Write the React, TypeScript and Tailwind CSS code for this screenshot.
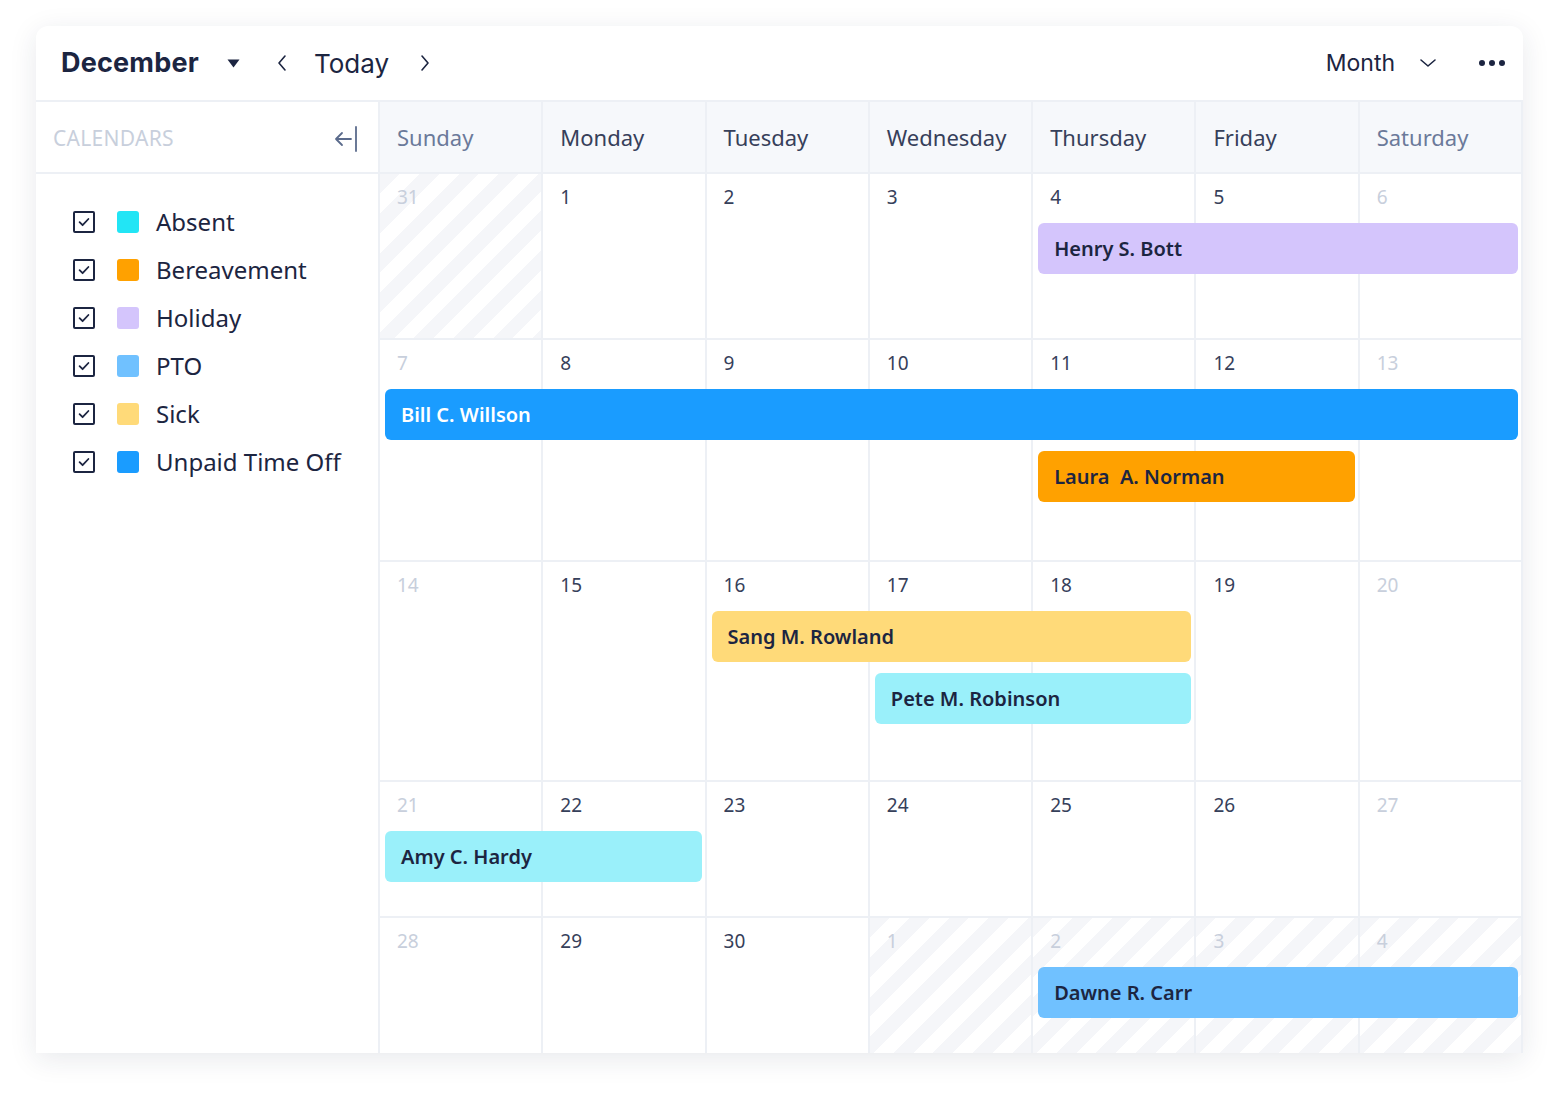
import React from 'react';

type Ev = { name: string; col: number; span: number; row: number; color: string; light?: boolean };
type Day = { n: number; muted?: boolean; striped?: boolean };
type Week = { h: string; days: Day[]; events: Ev[] };

const legend = [
    { label: 'Absent', color: 'bg-[#22e5f5]' },
    { label: 'Bereavement', color: 'bg-[#ffa100]' },
    { label: 'Holiday', color: 'bg-[#d4c5fc]' },
    { label: 'PTO', color: 'bg-[#70c1ff]' },
    { label: 'Sick', color: 'bg-[#ffda79]' },
    { label: 'Unpaid Time Off', color: 'bg-[#1a9cff]' },
];

const dayNames = ['Sunday', 'Monday', 'Tuesday', 'Wednesday', 'Thursday', 'Friday', 'Saturday'];

const colStart = ['', 'col-start-1', 'col-start-2', 'col-start-3', 'col-start-4', 'col-start-5', 'col-start-6', 'col-start-7'];
const colSpan = ['', 'col-span-1', 'col-span-2', 'col-span-3', 'col-span-4', 'col-span-5', 'col-span-6', 'col-span-7'];

const mk = (start: number, mutedIdx: number[], striped: number[] = [], wrapAt = 0): Day[] =>
    Array.from({ length: 7 }, (_, i) => {
        let n = start + i;
        if (wrapAt && n > wrapAt) n -= wrapAt;
        return { n, muted: mutedIdx.includes(i), striped: striped.includes(i) };
    });

const weeks: Week[] = [
    {
        h: 'h-[166px]',
        days: [{ n: 31, muted: true, striped: true }, ...mk(1, [5]).slice(0, 6)],
        events: [{ name: 'Henry S. Bott', col: 5, span: 3, row: 2, color: 'bg-[#d4c5fc]' }],
    },
    {
        h: 'h-[222px]',
        days: mk(7, [0, 6]),
        events: [
            { name: 'Bill C. Willson', col: 1, span: 7, row: 2, color: 'bg-[#1a9cff]', light: true },
            { name: 'Laura  A. Norman', col: 5, span: 2, row: 4, color: 'bg-[#ffa100]' },
        ],
    },
    {
        h: 'h-[220px]',
        days: mk(14, [0, 6]),
        events: [
            { name: 'Sang M. Rowland', col: 3, span: 3, row: 2, color: 'bg-[#ffda79]' },
            { name: 'Pete M. Robinson', col: 4, span: 2, row: 4, color: 'bg-[#9af0fa]' },
        ],
    },
    {
        h: 'h-[136px]',
        days: mk(21, [0, 6]),
        events: [{ name: 'Amy C. Hardy', col: 1, span: 2, row: 2, color: 'bg-[#9af0fa]' }],
    },
    {
        h: 'h-[135px]',
        days: mk(28, [0, 3, 4, 5, 6], [3, 4, 5, 6], 30),
        events: [{ name: 'Dawne R. Carr', col: 5, span: 3, row: 2, color: 'bg-[#70c1ff]' }],
    },
];

const stripes = 'bg-[repeating-linear-gradient(135deg,#f5f6f9_0px,#f5f6f9_14px,#ffffff_14px,#ffffff_28px)]';

function Check() {
    return (
        <div className="w-[22px] h-[22px] border-2 border-[#1c2541] rounded-[2px] flex items-center justify-center">
            <svg width="14" height="14" viewBox="0 0 14 14" fill="none">
                <path d="M2.6 7.2l3 3L11.4 4" stroke="#1c2541" strokeWidth="1.8" strokeLinecap="round" strokeLinejoin="round" />
            </svg>
        </div>
    );
}

export default function App() {
    return (
        <div className="min-h-screen bg-white pt-[26px] pl-[36px] pb-12 font-['Noto_Sans',sans-serif] text-[#1c2541]">
            <div className="w-[1487px] bg-white rounded-tl-[12px] rounded-tr-[12px] shadow-[0_6px_28px_rgba(30,40,70,0.10)] overflow-hidden">
                {/* Top bar */}
                <div className="h-[76px] border-b-2 border-[#edf0f5] flex items-center pl-[25px] pr-[18px] font-['Inter',sans-serif]">
                    <span className="text-[27px] font-bold tracking-[0.2px] text-[#1c2541]">December</span>
                    <svg className="ml-[28px]" width="13" height="9" viewBox="0 0 13 9">
                        <path d="M0.5 0.5h12L6.5 8.5z" fill="#1c2541" />
                    </svg>
                    <svg className="ml-[36px]" width="12" height="18" viewBox="0 0 12 18" fill="none">
                        <path d="M9 2L3 9l6 7" stroke="#1c2541" strokeWidth="1.6" strokeLinecap="round" strokeLinejoin="round" />
                    </svg>
                    <span className="ml-[26px] text-[26px] text-[#1c2541]">Today</span>
                    <svg className="ml-[30px]" width="12" height="18" viewBox="0 0 12 18" fill="none">
                        <path d="M3 2l6 7-6 7" stroke="#1c2541" strokeWidth="1.6" strokeLinecap="round" strokeLinejoin="round" />
                    </svg>
                    <div className="ml-auto flex items-center">
                        <span className="text-[23px] text-[#1c2541]">Month</span>
                        <svg className="ml-[24px]" width="18" height="10" viewBox="0 0 18 10" fill="none">
                            <path d="M2 2l7 6 7-6" stroke="#1c2541" strokeWidth="1.6" strokeLinecap="round" strokeLinejoin="round" />
                        </svg>
                        <div className="ml-[42px] flex gap-[4px]">
                            <span className="w-[6px] h-[6px] rounded-full bg-[#1c2541]" />
                            <span className="w-[6px] h-[6px] rounded-full bg-[#1c2541]" />
                            <span className="w-[6px] h-[6px] rounded-full bg-[#1c2541]" />
                        </div>
                    </div>
                </div>

                <div className="flex">
                    {/* Sidebar */}
                    <div className="w-[344px] shrink-0 border-r-2 border-[#edf0f5]">
                        <div className="h-[72px] border-b-2 border-[#edf0f5] flex items-center pl-[17px] pr-[20px] pt-[3px]">
                            <span className="text-[21px] text-[#c8cfdc] tracking-[0.3px]">CALENDARS</span>
                            <svg className="ml-auto" width="24" height="26" viewBox="0 0 24 26" fill="none">
                                <path d="M17 13H2M8 7l-6 6 6 6" stroke="#5b6b8c" strokeWidth="1.8" strokeLinecap="round" strokeLinejoin="round" />
                                <path d="M22 1v24" stroke="#5b6b8c" strokeWidth="1.8" strokeLinecap="round" />
                            </svg>
                        </div>
                        <div className="pt-[32px] pl-[37px] flex flex-col gap-[16px]">
                            {legend.map((l) => (
                                <div key={l.label} className="flex items-center h-[32px]">
                                    <Check />
                                    <span className={`ml-[22px] w-[22px] h-[22px] rounded-[3px] ${l.color}`} />
                                    <span className="ml-[17px] text-[24px] text-[#1c2541] leading-none">{l.label}</span>
                                </div>
                            ))}
                        </div>
                    </div>

                    {/* Month grid */}
                    <div className="flex-1 min-w-0">
                        <div className="grid grid-cols-7 h-[72px] bg-[#f6f8fb] border-b-2 border-[#edf0f5]">
                            {dayNames.map((d, i) => (
                                <div
                                    key={d}
                                    className={`flex items-center pl-[17px] text-[22px] border-r-2 border-[#edf0f5] ${i === 0 || i === 6 ? 'text-[#6b7a9a]' : 'text-[#36405a]'}`}
                                >
                                    {d}
                                </div>
                            ))}
                        </div>

                        {weeks.map((w, wi) => (
                            <div
                                key={wi}
                                className={`grid grid-cols-7 grid-rows-[49px_51px_11px_51px_1fr] ${w.h} ${wi < weeks.length - 1 ? 'border-b-2 border-[#edf0f5]' : ''}`}
                            >
                                {w.days.map((d, di) => (
                                    <div
                                        key={di}
                                        className={`${colStart[di + 1]} row-span-full border-r-2 border-[#edf0f5] pl-[17px] pt-[9px] text-[19px] leading-[28px] ${d.muted ? 'text-[#c8cfdc]' : 'text-[#36405a]'} ${d.striped ? stripes : ''}`}
                                    >
                                        {d.n}
                                    </div>
                                ))}
                                {w.events.map((e) => (
                                    <div
                                        key={e.name}
                                        className={`${colStart[e.col]} ${colSpan[e.span]} ${e.row === 2 ? 'row-start-2' : 'row-start-4'} z-10 ml-[5px] mr-[5px] rounded-[6px] flex items-center pl-[16px] text-[20px] font-semibold whitespace-pre ${e.color} ${e.light ? 'text-white' : 'text-[#1c2541]'}`}
                                    >
                                        {e.name}
                                    </div>
                                ))}
                            </div>
                        ))}
                    </div>
                </div>
            </div>
        </div>
    );
}
